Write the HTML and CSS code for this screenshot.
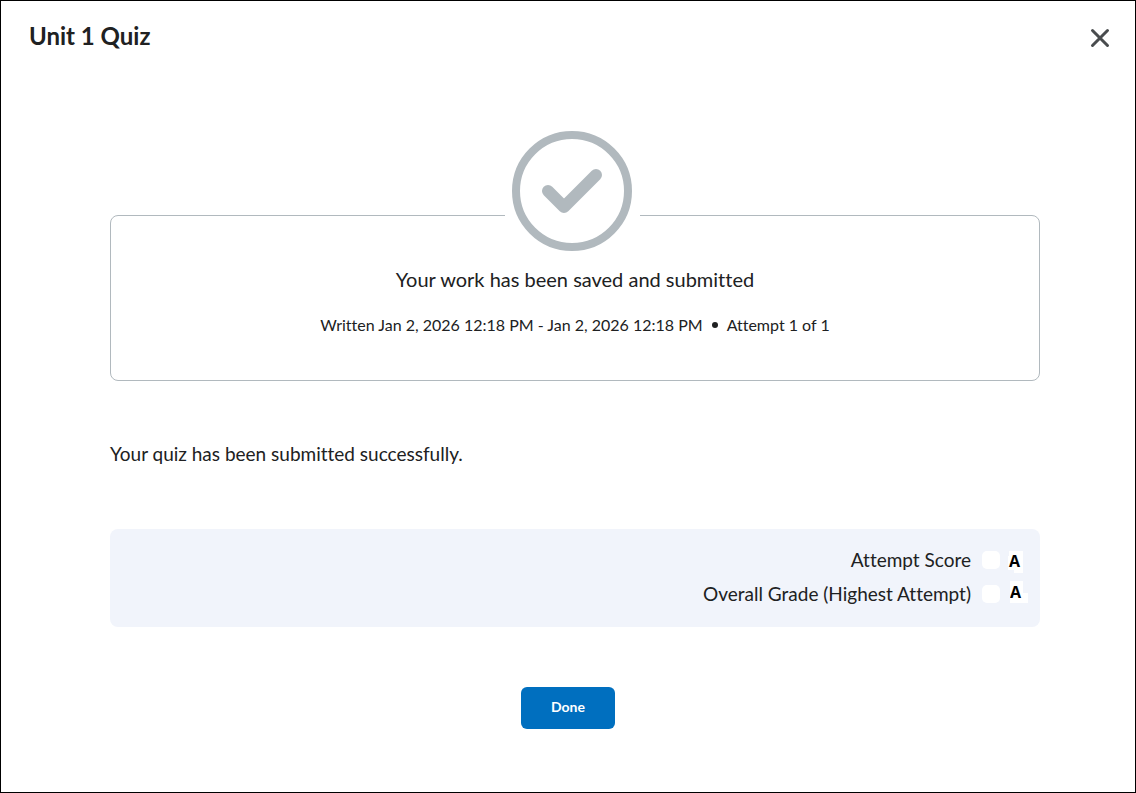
FILE: index.html
```html
<!DOCTYPE html>
<html lang="en">
<head>
    <meta charset="UTF-8">
    <meta name="viewport" content="width=device-width, initial-scale=1.0">
    <title>Unit 1 Quiz</title>
    <link rel="stylesheet" href="styles.css">
</head>
<body>
    <header class="dialog-header">
        <h1>Unit 1 Quiz</h1>
        <button class="close-btn" type="button" aria-label="Close">
            <svg width="20" height="20" viewBox="0 0 20 20" aria-hidden="true">
                <path d="M2.5 2.5 17.5 17.5M17.5 2.5 2.5 17.5" fill="none" stroke="#494c4e" stroke-width="3" stroke-linecap="round"/>
            </svg>
        </button>
    </header>
    <main class="content">
        <section class="status-card">
            <!-- Check mark sits on the top border of the card -->
            <div class="status-icon">
                <svg width="120" height="120" viewBox="0 0 120 120" aria-hidden="true">
                    <circle cx="60" cy="60" r="56" fill="none" stroke="#b1b9be" stroke-width="8"/>
                    <path d="M36 60 52 76 84 44" fill="none" stroke="#b1b9be" stroke-width="12" stroke-linecap="round" stroke-linejoin="round"/>
                </svg>
            </div>
            <h2>Your work has been saved and submitted</h2>
            <p class="attempt-info">
                <span>Written Jan 2, 2026 12:18 PM - Jan 2, 2026 12:18 PM</span>
                <span class="dot"></span>
                <span>Attempt 1 of 1</span>
            </p>
        </section>
        <p class="message">Your quiz has been submitted successfully.</p>
        <section class="scores">
            <div class="score-row">
                <span class="score-label">Attempt Score</span>
                <span class="score-box"></span>
                <span class="grade grade-attempt">A</span>
            </div>
            <div class="score-row">
                <span class="score-label">Overall Grade (Highest Attempt)</span>
                <span class="score-box"></span>
                <span class="grade grade-overall">A</span>
            </div>
        </section>
    </main>
    <footer class="dialog-footer">
        <button class="done-btn" type="button">Done</button>
    </footer>
</body>
</html>
```
FILE: styles.css
```css
* {
    box-sizing: border-box;
}
body {
    margin: 0;
    min-height: 100vh;
    border: 1px solid #000;
    background-color: #fff;
    color: #202122;
    font-family: Lato, sans-serif;
    font-size: 19px;
    font-variant-ligatures: none;
    line-height: 24px;
}
h1, h2, p {
    margin: 0;
}
.dialog-header {
    display: flex;
    justify-content: space-between;
    align-items: flex-end;
    padding: 19px 20px 0 28px;
}
h1 {
    font-size: 24px;
    line-height: 32px;
    font-weight: 700;
}
.close-btn {
    display: flex;
    padding: 5px 5px 4px;
    border: none;
    background: none;
    cursor: pointer;
}
.content {
    padding: 163px 95px 0 109px;
}
.status-card {
    position: relative;
    padding: 51px 24px 43px;
    border: 1px solid #b1b9be;
    border-radius: 8px;
    text-align: center;
}
.status-icon {
    position: absolute;
    top: -85px;
    left: calc(50% - 70px);
    display: flex;
    padding-left: 7px;
    width: 135px;
    background-color: #fff;
}
h2 {
    font-size: 20px;
    line-height: 24px;
    font-weight: 400;
}
.attempt-info {
    display: flex;
    justify-content: center;
    align-items: center;
    gap: 9px;
    margin-top: 22px;
    font-size: 16px;
}
.dot {
    width: 6px;
    height: 6px;
    border-radius: 50%;
    background-color: #202122;
}
.message {
    margin-top: 61px;
}
.scores {
    margin-top: 63px;
    padding: 14px 12px 16px;
    border-radius: 8px;
    background-color: #f1f4fb;
}
.score-row {
    display: flex;
    justify-content: flex-end;
    align-items: center;
    height: 34px;
}
.score-box {
    width: 18px;
    height: 18px;
    margin-left: 11px;
    border-radius: 5px;
    background-color: #fff;
}
.grade {
    width: 20px;
    height: 26px;
    margin-left: 8px;
    background-color: #fff;
    color: #000;
    font-family: "Open Sans", sans-serif;
    font-size: 16px;
    font-weight: 700;
    text-align: center;
}
.grade-attempt {
    padding-right: 7px;
    line-height: 28px;
    clip-path: polygon(1px 4px, 15px 4px, 15px 26px, 6px 26px, 6px 23px, 0 23px, 0 9px, 1px 9px);
}
.grade-overall {
    padding-right: 5px;
    line-height: 22px;
    clip-path: polygon(2px 0, 15px 0, 15px 12px, 20px 12px, 20px 22px, 2px 22px);
}
.dialog-footer {
    display: flex;
    justify-content: center;
    padding: 60px 20px;
}
.done-btn {
    padding: 8px 30px 10px;
    border: none;
    border-radius: 6px;
    background-color: #006fbf;
    color: #fff;
    font-family: Lato, sans-serif;
    font-size: 14px;
    line-height: 24px;
    font-weight: 700;
    cursor: pointer;
}
```
